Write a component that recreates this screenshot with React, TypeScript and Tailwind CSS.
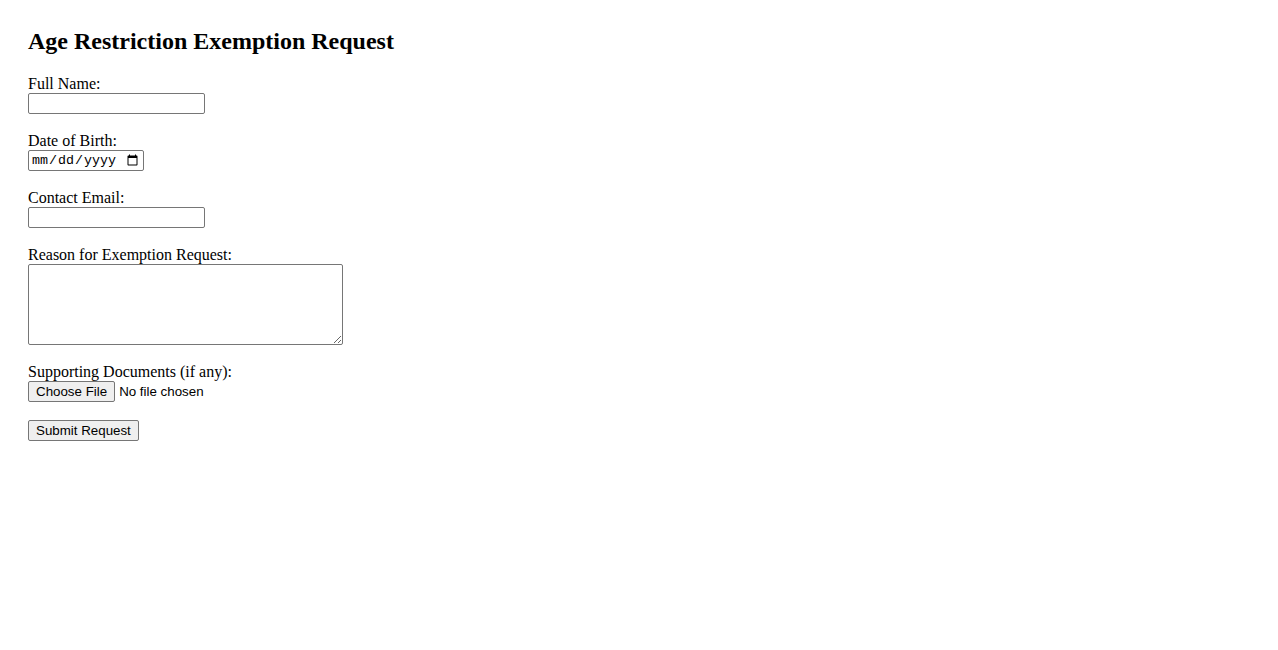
import React from 'react';

const labelCls = 'block h-[18px] leading-[18px] text-[16px]';
const fieldCls = 'block border border-[#767676] rounded-[2px] bg-white text-[13.33px] px-[2px]';

export default function App() {
  return (
    <div className="min-h-screen bg-white text-black pl-[28px] pt-[27px] font-['Liberation_Serif',serif]">
      <h2 className="text-[24px] font-bold leading-[28px] mb-[20px]">Age Restriction Exemption Request</h2>

      <form className="flex flex-col items-start gap-[18px]" onSubmit={(e) => e.preventDefault()}>
        {/* Full name */}
        <div>
          <label htmlFor="fullName" className={labelCls}>Full Name:</label>
          <input id="fullName" type="text" className={`${fieldCls} w-[177px] h-[21px] font-['Liberation_Sans',sans-serif]`} />
        </div>

        {/* Date of birth */}
        <div>
          <label htmlFor="dob" className={labelCls}>Date of Birth:</label>
          <input
            id="dob"
            type="date"
            className={`${fieldCls} w-[116px] h-[21px] font-['Liberation_Mono',monospace]`}
          />
        </div>

        {/* Email */}
        <div>
          <label htmlFor="email" className={labelCls}>Contact Email:</label>
          <input id="email" type="email" className={`${fieldCls} w-[177px] h-[21px] font-['Liberation_Sans',sans-serif]`} />
        </div>

        {/* Reason */}
        <div>
          <label htmlFor="reason" className={labelCls}>Reason for Exemption Request:</label>
          <textarea
            id="reason"
            className={`${fieldCls} w-[315px] h-[81px] resize font-['Liberation_Mono',monospace]`}
          />
        </div>

        {/* Documents */}
        <div>
          <label htmlFor="docs" className={labelCls}>Supporting Documents (if any):</label>
          <input
            id="docs"
            type="file"
            className="block h-[21px] text-[13.33px] leading-[20px] font-['Liberation_Sans',sans-serif]
                       file:h-[21px] file:px-[7px] file:mr-[4px] file:bg-[#efefef] file:border
                       file:border-[#767676] file:rounded-[2px] file:text-black"
          />
        </div>

        <button
          type="submit"
          className="h-[21px] px-[7px] bg-[#efefef] border border-[#767676] rounded-[2px]
                     text-[13.33px] leading-[19px] font-['Liberation_Sans',sans-serif]"
        >
          Submit Request
        </button>
      </form>
    </div>
  );
}
